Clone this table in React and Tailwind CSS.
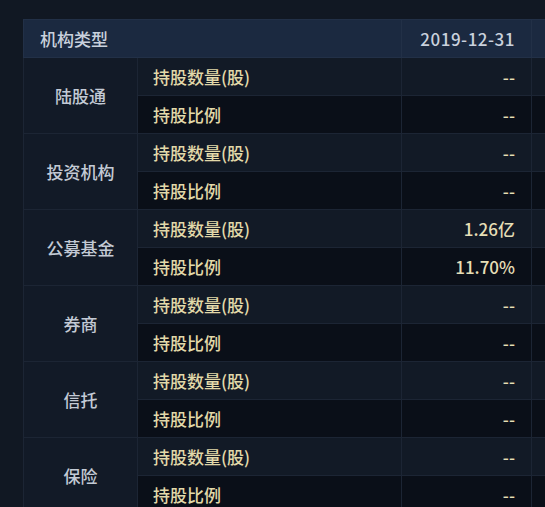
import React from "react";

const groups = [
  { name: "陆股通", qty: "--", ratio: "--" },
  { name: "投资机构", qty: "--", ratio: "--" },
  { name: "公募基金", qty: "1.26亿", ratio: "11.70%" },
  { name: "券商", qty: "--", ratio: "--" },
  { name: "信托", qty: "--", ratio: "--" },
  { name: "保险", qty: "--", ratio: "--" },
];

export default function App() {
  return (
    <div
      className="w-[545px] h-[507px] overflow-hidden bg-[#111823] pt-[19px] pl-[23px]"
      style={{ fontFamily: '"Noto Sans CJK SC", "Noto Sans", sans-serif' }}
    >
      <table className="border-collapse table-fixed w-[620px] text-[17px] font-medium leading-none">
        <colgroup>
          <col className="w-[114px]" />
          <col className="w-[264px]" />
          <col className="w-[130px]" />
          <col className="w-[112px]" />
        </colgroup>
        <thead>
          <tr className="h-[38px] bg-[#1b2940] text-[#c9d1dd]">
            <th className="border border-[#223047] text-left font-medium pl-[16px]" colSpan={2}>
              机构类型
            </th>
            <th className="border border-[#223047] text-right font-medium pr-[16px] tracking-[0.5px]">
              2019-12-31
            </th>
            <th className="border border-[#223047]"></th>
          </tr>
        </thead>
        <tbody>
          {groups.map((g) => (
            <React.Fragment key={g.name}>
              <tr className="h-[38px] bg-[#121a26]">
                <td
                  rowSpan={2}
                  className="border border-[#1c2534] bg-[#121a27] text-center text-[#c3cad5]"
                >
                  {g.name}
                </td>
                <td className="border border-[#1c2534] pl-[15px] text-[#e2d9a9]">
                  持股数量(股)
                </td>
                <td className="border border-[#1c2534] text-right pr-[16px] text-[#e6dfb6]">
                  {g.qty}
                </td>
                <td className="border border-[#1c2534]"></td>
              </tr>
              <tr className="h-[38px] bg-[#0a0f18]">
                <td className="border border-[#1c2534] pl-[15px] text-[#e2d9a9]">
                  持股比例
                </td>
                <td className="border border-[#1c2534] text-right pr-[16px] text-[#e6dfb6]">
                  {g.ratio}
                </td>
                <td className="border border-[#1c2534]"></td>
              </tr>
            </React.Fragment>
          ))}
        </tbody>
      </table>
    </div>
  );
}
